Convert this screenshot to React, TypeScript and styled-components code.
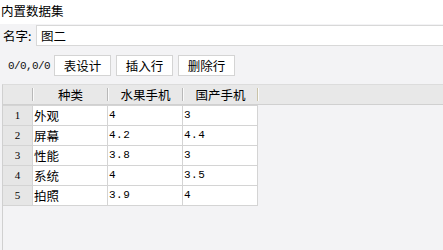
import styled, { createGlobalStyle } from "styled-components";

const GlobalStyle = createGlobalStyle`
  html, body {
    margin: 0;
    padding: 0;
    background: #f3f3f5;
  }
  body {
    font-family: "Noto Sans CJK SC", "Liberation Sans", sans-serif;
    font-size: 12px;
    color: #000;
  }
`;

// whole panel
const Page = styled.div`
  width: 443px;
  height: 250px;
  overflow: hidden;
  display: flex;
  flex-direction: column;
  background: #f3f3f5;
`;

const Title = styled.div`
  height: 24px;
  background: #fff;
  font-size: 12.5px;
  line-height: 22px;
  padding-left: 1px;
  flex-shrink: 0;
`;

const NameRow = styled.div`
  display: flex;
  align-items: center;
  height: 21px;
  margin-top: 1px;
  padding-left: 3px;
`;

const Label = styled.span`
  width: 33px;
  font-size: 12.5px;
  line-height: 21px;
`;

const NameInput = styled.div`
  flex: 1;
  height: 21px;
  box-sizing: border-box;
  border: 1px solid #d8d8d8;
  border-right: none;
  background: #fff;
  padding-left: 4px;
  font-size: 12.5px;
  line-height: 19px;
`;

const Toolbar = styled.div`
  display: flex;
  align-items: center;
  gap: 5px;
  margin-top: 9px;
  padding-left: 8px;
  height: 21px;
`;

const Counter = styled.span`
  width: 41px;
  font-family: "Liberation Mono", monospace;
  font-size: 11px;
  color: #111;
  letter-spacing: -0.6px;
`;

const Button = styled.div`
  width: 57px;
  height: 21px;
  box-sizing: border-box;
  border: 1px solid #d4d4d4;
  background: #fff;
  text-align: center;
  font-size: 12.5px;
  line-height: 19px;
`;

const Grid = styled.div`
  flex: 1;
  margin-top: 8px;
  margin-left: 2px;
  border-left: 1px solid #d0d0d0;
  border-top: 1px solid #dcdcdc;
`;

const HeaderRow = styled.div`
  display: flex;
  height: 20px;
  box-sizing: border-box;
  background: #e8e8e8;
  border-bottom: 1px solid #d0d0d0;
`;

const HeadCell = styled.div<{ $w: number; $sep?: string }>`
  position: relative;
  width: ${(p) => p.$w}px;
  flex-shrink: 0;
  text-align: center;
  font-size: 12.5px;
  line-height: 19px;
  &::after {
    content: "";
    position: absolute;
    right: 0;
    top: 3px;
    width: 1px;
    height: 13px;
    background: ${(p) => p.$sep || "#b8b8b8"};
    box-shadow: 1px 0 0 #fafafa;
  }
`;

const Body = styled.div`
  width: 255px;
  border-top: 1px solid #d4d4d4;
`;

const Row = styled.div`
  display: flex;
  height: 20px;
  box-sizing: border-box;
  border-bottom: 1px solid #d4d4d4;
`;

const NumCell = styled.div`
  width: 30px;
  box-sizing: border-box;
  border-right: 1px solid #d4d4d4;
  background: #e6e6e6;
  text-align: center;
  font-family: "Liberation Serif", serif;
  font-size: 11px;
  line-height: 19px;
`;

const Cell = styled.div<{ $num?: boolean }>`
  width: 75px;
  box-sizing: border-box;
  border-right: 1px solid #d4d4d4;
  background: #fff;
  padding-left: 1px;
  font-family: ${(p) =>
    p.$num
      ? `"Liberation Mono", monospace`
      : `"Noto Sans CJK SC", "Liberation Sans", sans-serif`};
  font-size: ${(p) => (p.$num ? 11 : 12.5)}px;
  letter-spacing: ${(p) => (p.$num ? 0.5 : 0)}px;
  line-height: 19px;
`;

const rows = [
  ["外观", "4", "3"],
  ["屏幕", "4.2", "4.4"],
  ["性能", "3.8", "3"],
  ["系统", "4", "3.5"],
  ["拍照", "3.9", "4"],
];

export default function App() {
  return (
    <Page>
      <GlobalStyle />
      <Title>内置数据集</Title>
      <NameRow>
        <Label>名字:</Label>
        <NameInput>图二</NameInput>
      </NameRow>
      <Toolbar>
        <Counter>0/0,0/0</Counter>
        <Button>表设计</Button>
        <Button>插入行</Button>
        <Button>删除行</Button>
      </Toolbar>
      <Grid>
        <HeaderRow>
          <HeadCell $w={30} />
          <HeadCell $w={75}>种类</HeadCell>
          <HeadCell $w={75}>水果手机</HeadCell>
          <HeadCell $w={75} $sep="#c9c3a8">
            国产手机
          </HeadCell>
        </HeaderRow>
        <Body>
          {rows.map((r, i) => (
            <Row key={i}>
              <NumCell>{i + 1}</NumCell>
              <Cell>{r[0]}</Cell>
              <Cell $num>{r[1]}</Cell>
              <Cell $num>{r[2]}</Cell>
            </Row>
          ))}
        </Body>
      </Grid>
    </Page>
  );
}
